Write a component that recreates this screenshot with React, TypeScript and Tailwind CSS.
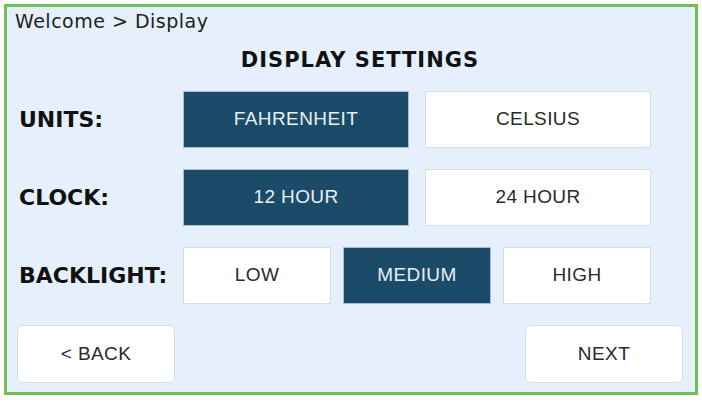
import React, { useState } from 'react'

type Opt = { id: string; label: string }

const rows: { key: string; label: string; options: Opt[]; initial: string }[] = [
  {
    key: 'units',
    label: 'UNITS:',
    options: [
      { id: 'f', label: 'FAHRENHEIT' },
      { id: 'c', label: 'CELSIUS' },
    ],
    initial: 'f',
  },
  {
    key: 'clock',
    label: 'CLOCK:',
    options: [
      { id: '12', label: '12 HOUR' },
      { id: '24', label: '24 HOUR' },
    ],
    initial: '12',
  },
  {
    key: 'backlight',
    label: 'BACKLIGHT:',
    options: [
      { id: 'low', label: 'LOW' },
      { id: 'med', label: 'MEDIUM' },
      { id: 'high', label: 'HIGH' },
    ],
    initial: 'med',
  },
]

const App: React.FC = () => {
  const [sel, setSel] = useState<Record<string, string>>(
    Object.fromEntries(rows.map(r => [r.key, r.initial]))
  )

  return (
    <div className="w-[702px] h-[403px] bg-white pt-[4px] pl-[4px] font-['Liberation_Sans',sans-serif]">
      <div className="w-[694px] h-[391px] border-[3px] border-[#6fbf52] bg-[#e5f0fc] flex flex-col">
        {/* breadcrumb */}
        <div className="pl-[8px] pt-[3px] h-[26px] text-[19px] leading-[22px] tracking-[0.5px] text-[#222] font-['DejaVu_Sans',sans-serif]">
          Welcome &gt; Display
        </div>

        {/* title */}
        <div className="mt-[14px] h-[26px] flex justify-center pl-[18px] text-[21px] leading-[26px] font-bold tracking-[1px] text-[#111] font-['DejaVu_Sans',sans-serif]">
          DISPLAY SETTINGS
        </div>

        {/* option rows */}
        <div className="mt-[18px] flex flex-col gap-[21px]">
          {rows.map(r => (
            <div key={r.key} className="flex items-center h-[57px]">
              <div className="w-[176px] pl-[12px] text-[22px] font-bold text-[#111] font-['DejaVu_Sans',sans-serif]">
                {r.label}
              </div>
              <div className={'w-[468px] flex h-full ' + (r.options.length === 3 ? 'gap-[12px]' : 'gap-[16px]')}>
                {r.options.map(o => {
                  const on = sel[r.key] === o.id
                  return (
                    <button
                      key={o.id}
                      onClick={() => setSel(s => ({ ...s, [r.key]: o.id }))}
                      className={
                        'flex-1 h-full flex items-center justify-center text-[19px] tracking-[0.4px] border ' +
                        (on
                          ? 'bg-[#1b4b69] text-[#e6eff5] border-[#a9bccb]'
                          : 'bg-white text-[#2a2a2a] border-[#d8dde3]')
                      }
                    >
                      {o.label}
                    </button>
                  )
                })}
              </div>
            </div>
          ))}
        </div>

        {/* nav */}
        <div className="mt-[21px] flex justify-between pl-[10px] pr-[12px]">
          <button className="w-[158px] h-[58px] bg-white rounded-[6px] border border-[#d8dde3] text-[19px] tracking-[0.4px] text-[#2a2a2a]">
            &lt; BACK
          </button>
          <button className="w-[158px] h-[58px] bg-white rounded-[6px] border border-[#d8dde3] text-[19px] tracking-[0.4px] text-[#2a2a2a]">
            NEXT
          </button>
        </div>
      </div>
    </div>
  )
}

export default App
